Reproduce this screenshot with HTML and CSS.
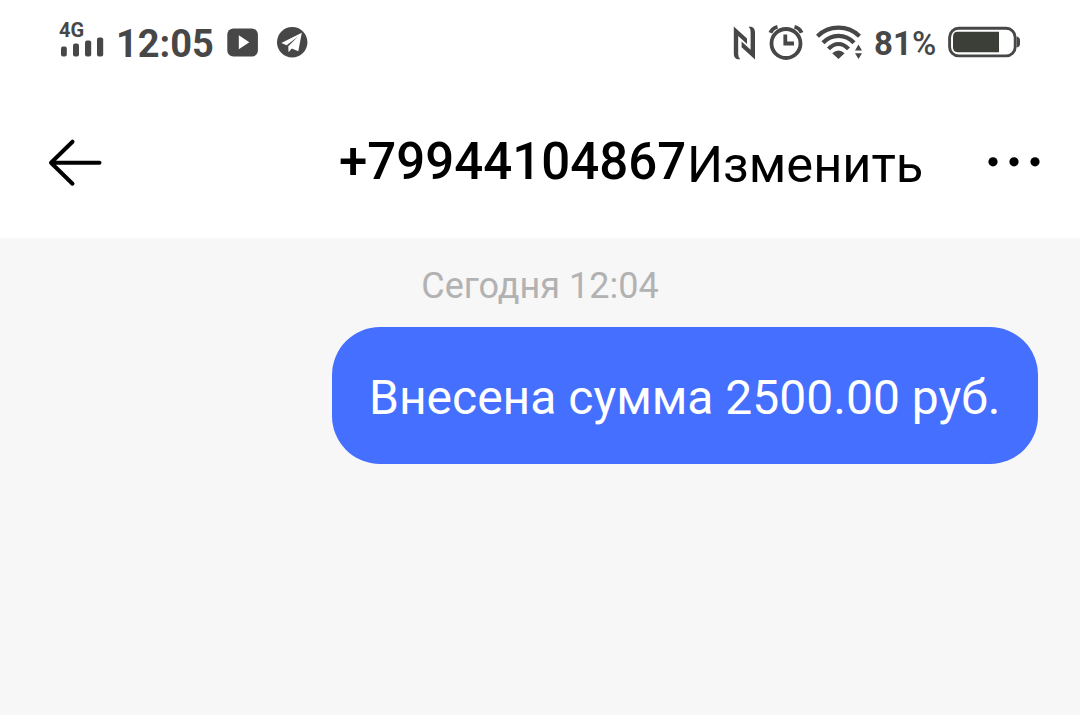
FILE: index.html
```html
<!DOCTYPE html>
<html lang="ru">
<head>
  <meta charset="UTF-8" />
  <meta name="viewport" content="width=device-width, initial-scale=1.0" />
  <title>+79944104867</title>
  <link rel="stylesheet" href="styles.css">
</head>
<body>

  <div class="status">
    <div class="signal">
      <span class="network">4G</span>
      <svg width="44" height="20" viewBox="0 0 44 20" fill="#474747">
        <rect x="1" y="9.5" width="5.8" height="10" rx="2" />
        <rect x="13" y="6.5" width="6" height="13" rx="2" />
        <rect x="25" y="3.5" width="6.2" height="16" rx="2" />
        <rect x="37" y="0.5" width="6.2" height="19" rx="2" />
      </svg>
    </div>
    <span class="clock">12:05</span>
    <svg class="video" width="31" height="30" viewBox="0 0 31 30">
      <rect x="0.3" y="0.4" width="30.6" height="28.2" rx="6" fill="#474747" />
      <path d="M11.8 7.3 22.3 14.3 11.8 21.3z" fill="#fff" />
    </svg>
    <svg class="telegram" width="31" height="32" viewBox="0 0 31 32">
      <circle cx="15.2" cy="15.2" r="15.2" fill="#474747" />
      <path d="M24.8 5.7 4.3 15.9 9.6 18.3 20.8 9.8 11.3 19.2 11.5 25.2 14.8 21.6 21.3 24.3z" fill="#fff" />
    </svg>

    <svg class="nfc" width="23" height="34" viewBox="0 0 23 34" fill="#474747">
      <path d="M.8.5 14 12.5V18L5.2 10V28Q5.2 31.5 7.2 33.2H4.4Q.8 32 .8 27.5z" />
      <path d="M22 33.5 8.6 21.3V15.6L17.6 23.8V6Q17.6 2.5 15.6.8H18.4Q22 2 22 6.5z" />
    </svg>
    <svg class="alarm" width="36" height="36" viewBox="0 0 36 36" fill="none" stroke="#474747">
      <circle cx="18" cy="18.5" r="14.5" stroke-width="3.8" />
      <path d="M17.3 9.5V18.5H26" stroke-width="3.8" />
      <path d="M2.4 7.7Q4.5 3 9.5 1.9M26.5 1.9Q31.5 3 33.6 7.7" stroke-width="4" />
    </svg>
    <svg class="wifi" width="47" height="36" viewBox="0 0 47 36" fill="none" stroke="#474747" stroke-width="4.2">
      <path d="M1.5 11.2Q10 2.6 22.5 2.6T43.5 11.2" />
      <path d="M7 17.8Q13.5 10.8 22.5 10.8T38 17.8" />
      <path d="M12.5 23.9Q17 19 22.5 19T32.5 23.9" />
      <path d="M16.2 28.3Q22.5 22.8 28.6 28.3L22.5 34z" fill="#474747" stroke="none" />
      <path d="M39 25.4 42.5 19.6 46 25.4zM39 28.2 42.5 34 46 28.2z" fill="#474747" stroke="none" />
    </svg>
    <span class="percent">81<span class="sign">%</span></span>
    <svg class="battery" width="73" height="32" viewBox="0 0 73 32">
      <rect x="1.6" y="1.3" width="65.6" height="27.6" rx="9" fill="none" stroke="#474747" stroke-width="2.9" />
      <path d="M9.5 4.8H51V25.2H9.5Q5 25.2 5 20V10Q5 4.8 9.5 4.8z" fill="#3c3e38" />
      <path d="M68.8 9.5Q72 10.5 72 13V17Q72 19.5 68.8 20.5z" fill="#474747" />
    </svg>
  </div>

  <header class="header">
    <svg class="back" width="54" height="48" viewBox="0 0 54 48" fill="none" stroke="#000" stroke-width="4" stroke-linecap="round" stroke-linejoin="round">
      <path d="M51.5 24.7H3M24.5 3.7 3 24.7 24.5 45.7" />
    </svg>
    <span class="phone">+79944104867</span>
    <span class="edit">Изменить</span>
    <svg class="more" width="54" height="12" viewBox="0 0 54 12">
      <circle cx="4" cy="5.8" r="4.6" />
      <circle cx="25" cy="5.8" r="4.6" />
      <circle cx="46" cy="5.8" r="4.6" />
    </svg>
  </header>

  <main class="chat">
    <div class="date">Сегодня 12:04</div>
    <div class="message">Внесена сумма 2500.00 руб.</div>
  </main>

</body>
</html>
```

FILE: styles.css
```css
* {
  box-sizing: border-box;
}
body {
  margin: 0;
  height: 715px;
  display: flex;
  flex-direction: column;
  overflow: hidden;
  background: #fff;
  color: #000;
  font-family: Roboto, sans-serif;
}
svg {
  display: block;
  flex: none;
  overflow: visible;
}
.status {
  height: 86px;
  display: flex;
  align-items: center;
  padding: 0 59px 0 60px;
  color: #474747;
  white-space: nowrap;
}
.signal {
  position: relative;
  height: 42px;
  padding-top: 15px;
}
.network {
  position: absolute;
  left: -1px;
  top: -4px;
  font-size: 20px;
  line-height: 24px;
  font-weight: 700;
}
.clock {
  width: 98px;
  margin-left: 12px;
  padding-top: 1px;
  font-size: 38px;
  line-height: 46px;
  font-weight: 700;
}
.video {
  margin-left: 13px;
}
.telegram {
  margin-left: 19px;
}
.nfc {
  margin-left: auto;
}
.alarm {
  margin-left: 12px;
}
.wifi {
  margin-left: 12px;
}
.percent {
  width: 62px;
  margin-left: 11px;
  padding-top: 2px;
  font-size: 33px;
  line-height: 40px;
  font-weight: 700;
}
.sign {
  font-weight: 500;
}
.battery {
  margin-left: 12px;
}
.header {
  height: 152px;
  display: flex;
  align-items: center;
  padding: 0 37px 0 48px;
  white-space: nowrap;
}
.phone {
  width: 350px;
  margin-left: 237px;
  font-size: 51px;
  line-height: 60px;
  font-weight: 500;
}
.edit {
  padding-top: 5px;
  margin-left: -2px;
  font-size: 50.6px;
  line-height: 60px;
}
.more {
  margin-left: auto;
}
.chat {
  flex: 1;
  display: flex;
  flex-direction: column;
  padding: 26px 42px 0;
  background: #f7f7f7;
}
.date {
  text-align: center;
  font-size: 36px;
  line-height: 44px;
  color: #b2b2b2;
}
.message {
  align-self: flex-end;
  width: 706px;
  height: 137px;
  margin-top: 19px;
  padding-left: 37px;
  border-radius: 48px;
  background: #456fff;
  color: #fff;
  font-size: 48px;
  line-height: 142px;
  white-space: nowrap;
}
```
